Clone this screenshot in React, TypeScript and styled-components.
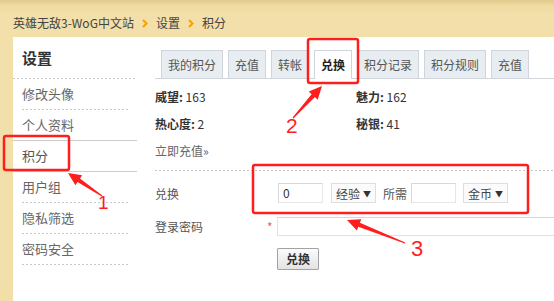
import React from "react";
import styled, { createGlobalStyle, css } from "styled-components";

const GlobalStyle = createGlobalStyle`
  html, body { margin: 0; padding: 0; }
  body {
    background: #f1dea8;
    font-family: "Noto Sans CJK SC", "Noto Sans", sans-serif;
    font-size: 12px;
    color: #333;
  }
  * { box-sizing: border-box; }
`;

const Page = styled.div`
  position: relative;
  width: 554px;
  height: 301px;
  overflow: hidden;
  background: linear-gradient(#e4c98c 0px, #efdba3 6px, #f2dfa9 14px, #f1dea8 100%);
`;

const Breadcrumb = styled.div`
  height: 37px;
  padding: 9px 0 0 13px;
  display: flex;
  align-items: center;
  gap: 7px;
  font-size: 12px;
  color: #444;
  line-height: 28px;
`;

const Crumb = styled.span`
  white-space: nowrap;
`;

const Chevron = () => (
  <svg width="6" height="9" viewBox="0 0 6 9" style={{ margin: "0 1px" }}>
    <polyline points="1,1 4.5,4.5 1,8" fill="none" stroke="#f2a300" strokeWidth="2" />
  </svg>
);

const Panel = styled.div`
  margin-left: 13px;
  height: 264px;
  background: #fff;
  display: flex;
`;

const dotted = css`
  background-image: linear-gradient(to right, #c8c8c8 50%, transparent 50%);
  background-size: 4px 1px;
  background-repeat: repeat-x;
  background-position: left bottom;
`;

const Sidebar = styled.nav`
  width: 124px;
  flex: none;
`;

const SideTitle = styled.div`
  height: 42px;
  line-height: 41px;
  padding-left: 9px;
  font-size: 15px;
  font-weight: bold;
  color: #333;
  ${dotted}
`;

const SideItem = styled.div<{ $active?: boolean }>`
  height: 31px;
  line-height: 30px;
  margin: 0 9px;
  font-size: 13px;
  color: #666;
  ${dotted}
  ${(p) =>
    p.$active &&
    css`
      margin: -1px 0 0 0;
      height: 32px;
      padding: 0 9px;
      background: #fff;
      border-top: 1px solid #ccc;
      border-bottom: 1px solid #ccc;
      line-height: 30px;
      color: #555;
    `}
`;

const Main = styled.main`
  flex: 1;
  padding: 13px 0 0 18px;
  min-width: 0;
`;

const Tabs = styled.div`
  display: flex;
  gap: 5px;
  padding-left: 6px;
  height: 29px;
  border-bottom: 1px solid #cfd5db;
`;

const Tab = styled.div<{ $active?: boolean }>`
  height: 28px;
  line-height: 27px;
  padding: 0 6px;
  border: 1px solid #cfd5db;
  border-bottom: none;
  background: #e8edf2;
  color: #555;
  font-size: 12px;
  white-space: nowrap;
  ${(p) =>
    p.$active &&
    css`
      height: 29px;
      background: #fff;
      color: #222;
      font-weight: bold;
    `}
`;

const Stats = styled.div`
  display: grid;
  grid-template-columns: 201px 201px;
  margin-top: 4px;
  line-height: 27px;
  font-size: 12px;
  color: #333;
`;

const StatLabel = styled.b`
  font-weight: bold;
  color: #333;
`;

const RechargeLink = styled.a`
  grid-column: 1 / span 2;
  color: #666;
  text-decoration: none;
`;

const Divider = styled.div`
  height: 1px;
  margin-top: 6px;
  ${dotted}
`;

const FormRow = styled.div<{ $pt: number; $pb: number }>`
  display: grid;
  grid-template-columns: 113px 9px 1fr;
  align-items: center;
  padding: ${(p) => p.$pt}px 0 ${(p) => p.$pb}px 0;
  font-size: 12px;
  color: #555;
`;

const Label = styled.div`
  color: #555;
`;

const Star = styled.span`
  color: #f06060;
  font-size: 12px;
  margin-left: -1px;
`;

const Fields = styled.div`
  display: flex;
  align-items: center;
  white-space: nowrap;
`;

const TextBox = styled.div<{ $ml?: number }>`
  width: 45px;
  height: 20px;
  margin-left: ${(p) => p.$ml ?? 0}px;
  border: 1px solid;
  border-color: #d8d8d8 #e6e6e6 #e6e6e6 #d8d8d8;
  padding-left: 4px;
  line-height: 18px;
  font-size: 12px;
  color: #333;
  background: #fff;
`;

const SelectBox = styled.div<{ $ml?: number }>`
  width: 45px;
  height: 20px;
  margin-left: ${(p) => p.$ml ?? 0}px;
  border: 1px solid #dedede;
  background: #fbfbfb;
  display: flex;
  align-items: center;
  justify-content: space-between;
  padding: 0 4px 0 4px;
  font-size: 12px;
  color: #444;
`;

const Caret = styled.span`
  font-size: 8px;
  color: #333;
`;

const InlineText = styled.span<{ $ml?: number }>`
  margin-left: ${(p) => p.$ml ?? 0}px;
  color: #555;
`;

const PasswordBox = styled.div`
  width: 320px;
  height: 19px;
  border: 1px solid;
  border-color: #d6d6d6 #e3e3e3 #e0e0e0 #e3e3e3;
  background: #fff;
`;

const ButtonRow = styled.div`
  padding: 12px 0 0 122px;
`;

const Button = styled.button`
  width: 42px;
  height: 22px;
  padding: 0;
  border: 1px solid #a3a3a3;
  border-radius: 1px;
  background: linear-gradient(#fbfbfb, #e3e3e3);
  font-family: "Noto Sans CJK SC", "Noto Sans", sans-serif;
  font-size: 12px;
  font-weight: bold;
  color: #333;
  line-height: 20px;
`;

const Overlay = styled.svg`
  position: absolute;
  left: 0;
  top: 0;
  pointer-events: none;
`;

const RED = "#ff1e1e";

function arrowPoints(tx: number, ty: number, px: number, py: number) {
  const dx = px - tx;
  const dy = py - ty;
  const len = Math.hypot(dx, dy);
  const ux = dx / len;
  const uy = dy / len;
  const nx = -uy;
  const ny = ux;
  const h = 13;
  const w = 6;
  const bx = px - ux * h;
  const by = py - uy * h;
  const pts: [number, number][] = [
    [tx + nx * 0.6, ty + ny * 0.6],
    [bx + nx * 2.2, by + ny * 2.2],
    [bx + nx * w, by + ny * w],
    [px, py],
    [bx - nx * w, by - ny * w],
    [bx - nx * 2.2, by - ny * 2.2],
    [tx - nx * 0.6, ty - ny * 0.6],
  ];
  return pts.map((p) => p.map((v) => v.toFixed(1)).join(",")).join(" ");
}

const Annotations = () => (
  <Overlay width={554} height={301} viewBox="0 0 554 301">
    <rect x={4} y={136} width={65} height={34} rx={2} fill="none" stroke={RED} strokeWidth={2.5} />
    <rect x={308} y={39} width={50} height={44} rx={2} fill="none" stroke={RED} strokeWidth={2.5} />
    <rect x={253} y={165} width={275} height={48} rx={2} fill="none" stroke={RED} strokeWidth={2.5} />
    <polygon points={arrowPoints(102, 196, 68, 173)} fill={RED} />
    <polygon points={arrowPoints(293, 118, 322, 86)} fill={RED} />
    <polygon points={arrowPoints(405, 243, 347, 220)} fill={RED} />
    <text x={98} y={209} fill={RED} fontFamily="Liberation Sans, sans-serif" fontSize={19}>1</text>
    <text x={286} y={133} fill={RED} fontFamily="Liberation Sans, sans-serif" fontSize={21}>2</text>
    <text x={411} y={256} fill={RED} fontFamily="Liberation Sans, sans-serif" fontSize={22}>3</text>
  </Overlay>
);

const sideItems = ["修改头像", "个人资料", "积分", "用户组", "隐私筛选", "密码安全"];
const tabs = ["我的积分", "充值", "转帐", "兑换", "积分记录", "积分规则", "充值"];

export default function App() {
  return (
    <>
      <GlobalStyle />
      <Page>
        <Breadcrumb>
          <Crumb>英雄无敌3-WoG中文站</Crumb>
          <Chevron />
          <Crumb>设置</Crumb>
          <Chevron />
          <Crumb>积分</Crumb>
        </Breadcrumb>
        <Panel>
          <Sidebar>
            <SideTitle>设置</SideTitle>
            {sideItems.map((s) => (
              <SideItem key={s} $active={s === "积分"}>
                {s}
              </SideItem>
            ))}
          </Sidebar>
          <Main>
            <Tabs>
              {tabs.map((t, i) => (
                <Tab key={i} $active={i === 3}>
                  {t}
                </Tab>
              ))}
            </Tabs>
            <Stats>
              <span>
                <StatLabel>威望:</StatLabel> 163
              </span>
              <span>
                <StatLabel>魅力:</StatLabel> 162
              </span>
              <span>
                <StatLabel>热心度:</StatLabel> 2
              </span>
              <span>
                <StatLabel>秘银:</StatLabel> 41
              </span>
              <RechargeLink href="#">立即充值»</RechargeLink>
            </Stats>
            <Divider />
            <FormRow $pt={12} $pb={14}>
              <Label>兑换</Label>
              <span />
              <Fields>
                <TextBox $ml={1}>0</TextBox>
                <SelectBox $ml={8}>
                  经验<Caret>▼</Caret>
                </SelectBox>
                <InlineText $ml={7}>所需</InlineText>
                <TextBox $ml={4} />
                <SelectBox $ml={7}>
                  金币<Caret>▼</Caret>
                </SelectBox>
              </Fields>
            </FormRow>
            <FormRow $pt={0} $pb={0}>
              <Label>登录密码</Label>
              <Star>*</Star>
              <PasswordBox />
            </FormRow>
            <ButtonRow>
              <Button>兑换</Button>
            </ButtonRow>
          </Main>
        </Panel>
        <Annotations />
      </Page>
    </>
  );
}
